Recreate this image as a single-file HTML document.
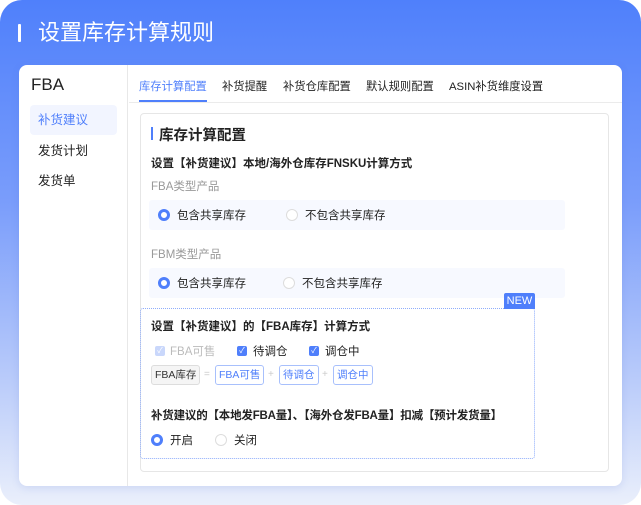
<!DOCTYPE html>
<html><head><meta charset="utf-8"><style>
*{margin:0;padding:0;box-sizing:border-box}
body{width:641px;height:505px;overflow:hidden;background:#fff;font-family:"Liberation Sans","Noto Sans CJK SC",sans-serif;position:relative}
.bg{position:absolute;inset:0;border-radius:22px;background:linear-gradient(180deg,#4f80fb 0%,#7a9dfb 40%,#b9cbfa 75%,#eaeffb 100%)}
.title{position:absolute;left:18px;top:18px;color:#fff;font-size:22px;line-height:30px}
.title:before{content:"";position:absolute;left:0;top:6px;width:3px;height:18px;background:#fff;border-radius:1px}
.title span{margin-left:20px}
.panel{position:absolute;left:19px;top:65px;width:603px;height:421px;background:#fff;border-radius:8px;box-shadow:0 2px 8px rgba(80,110,200,.15)}
.side{position:absolute;left:0;top:0;width:109px;height:100%;border-right:1px solid #e8e8e8}
.fba{position:absolute;left:12px;top:10px;font-size:17px;color:#222}
.mi{position:absolute;left:11px;width:87px;height:30px;line-height:30px;padding-left:8px;font-size:12.5px;color:#222;border-radius:4px}
.mi.on{background:#f2f5ff;color:#4f7ffb}
.tabs{position:absolute;left:110px;top:0;right:0;height:38px;border-bottom:1px solid #ebebeb}
.tab{position:absolute;top:13px;font-size:11.3px;color:#222}
.tab.on{color:#4f7ffb}
.ul{position:absolute;top:35px;width:68px;height:2px;background:#4f7ffb}
.card{position:absolute;left:140px;top:113px;width:469px;height:359px;border:1px solid #e6e6e6;border-radius:4px;background:#fff}
.t{position:absolute;font-size:11.5px;color:#222;white-space:nowrap}
.b{font-weight:bold}
.g{color:#999}
.row{position:absolute;left:149px;width:416px;height:30px;background:#f7f9ff;border-radius:3px}
.r{position:absolute;width:12px;height:12px;border-radius:50%;border:1px solid #ddd;background:#fff}
.r.on{border:3.5px solid #4f7ffb}
.cb{position:absolute;width:10px;height:10px;background:#4f7ffb;border-radius:2px;color:#fff;font-size:8px;line-height:10px;text-align:center}
.cb.dis{background:#c9d7fb}
.tag{position:absolute;top:365px;height:20px;line-height:18px;padding:0 3px;border:1px solid #a8c0fc;border-radius:3px;color:#4f7ffb;font-size:10.5px;white-space:nowrap}
.dash{position:absolute;left:140px;top:308px;width:395px;height:151px;border:1px dotted #8fadfb;border-radius:3px}
.new{position:absolute;left:504px;top:293px;width:31px;height:16px;background:#4f7ffb;color:#fff;font-size:11px;line-height:16px;text-align:center;border-radius:2px 2px 0 0}
.op{position:absolute;top:369px;color:#ccc;font-size:10px}
</style></head><body>
<div class="bg"></div>
<div class="title"><span>设置库存计算规则</span></div>
<div class="panel">
 <div class="side">
  <div class="fba">FBA</div>
  <div class="mi on" style="top:40px">补货建议</div>
  <div class="mi" style="top:71px">发货计划</div>
  <div class="mi" style="top:101px">发货单</div>
 </div>
 <div class="tabs"></div>
 <div class="tab on" style="left:120px">库存计算配置</div>
 <div class="tab" style="left:203px">补货提醒</div>
 <div class="tab" style="left:264px">补货仓库配置</div>
 <div class="tab" style="left:347px">默认规则配置</div>
 <div class="tab" style="left:430px">ASIN补货维度设置</div>
 <div class="ul" style="left:120px"></div>
</div>
<div class="card"></div>
<div style="position:absolute;left:151px;top:127px;width:2px;height:13px;background:#4f7ffb"></div>
<div class="t" style="left:159px;top:124px;font-size:14.5px;font-weight:bold">库存计算配置</div>
<div class="t b" style="left:151px;top:155px">设置【补货建议】本地/海外仓库存FNSKU计算方式</div>
<div class="t g" style="left:151px;top:178px">FBA类型产品</div>
<div class="row" style="top:200px"></div>
<div class="r on" style="left:158px;top:209px"></div><div class="t" style="left:177px;top:207px">包含共享库存</div>
<div class="r" style="left:286px;top:209px"></div><div class="t" style="left:305px;top:207px">不包含共享库存</div>
<div class="t g" style="left:151px;top:246px">FBM类型产品</div>
<div class="row" style="top:268px"></div>
<div class="r on" style="left:158px;top:277px"></div><div class="t" style="left:177px;top:275px">包含共享库存</div>
<div class="r" style="left:283px;top:277px"></div><div class="t" style="left:302px;top:275px">不包含共享库存</div>
<div class="dash"></div>
<div class="new">NEW</div>
<div class="t b" style="left:151px;top:318px">设置【补货建议】的【FBA库存】计算方式</div>
<div class="cb dis" style="left:155px;top:346px">✓</div><div class="t" style="left:170px;top:343px;color:#bbb">FBA可售</div>
<div class="cb" style="left:237px;top:346px">✓</div><div class="t" style="left:253px;top:343px">待调仓</div>
<div class="cb" style="left:309px;top:346px">✓</div><div class="t" style="left:325px;top:343px">调仓中</div>
<div class="tag" style="left:151px;color:#333;border-color:#ddd;background:#f5f5f5">FBA库存</div>
<div class="op" style="left:204px">=</div>
<div class="tag" style="left:215px">FBA可售</div>
<div class="op" style="left:268px">+</div>
<div class="tag" style="left:279px">待调仓</div>
<div class="op" style="left:322px">+</div>
<div class="tag" style="left:333px">调仓中</div>
<div class="t b" style="left:151px;top:407px;letter-spacing:-0.2px">补货建议的【本地发FBA量】、【海外仓发FBA量】扣减【预计发货量】</div>
<div class="r on" style="left:151px;top:434px"></div><div class="t" style="left:170px;top:432px">开启</div>
<div class="r" style="left:215px;top:434px"></div><div class="t" style="left:234px;top:432px">关闭</div>
</body></html>
